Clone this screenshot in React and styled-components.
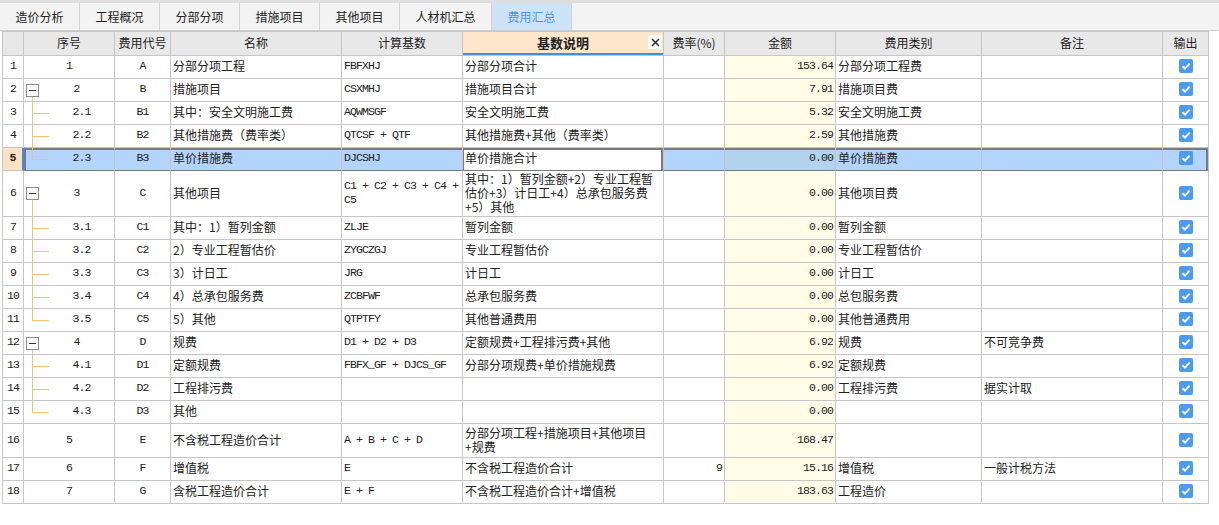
import React from "react";
import styled, { createGlobalStyle } from "styled-components";

const CJK = `"Noto Sans CJK SC", "Noto Sans", sans-serif`;
const MONO = `"Liberation Mono", "DejaVu Sans Mono", monospace`;
const GRID = "#c6c6c6";
const TREE = "#f7c46a";
const DARK = "#7a7a7a";
const COLS = "21px 91px 56px 171px 121px 201px 61px 111px 146px 181px 46px";

const GlobalStyle = createGlobalStyle`
  body {
    margin: 0;
    background: #fff;
    font-family: ${CJK};
    font-size: 12px;
    color: #222;
  }
`;

const Page = styled.div`
  width: 1219px;
  height: 525px;
  overflow: hidden;
  background: #fff;
`;

const TabBar = styled.div`
  display: flex;
  height: 27px;
  background: #f3f3f3;
  border-top: 3px solid #dedede;
  border-bottom: 1px solid #d0d0d0;
`;

const Tab = styled.div`
  display: flex;
  align-items: center;
  padding: 0 15.5px 1px;
  border-right: 1px solid #d4d4d4;
  font-size: 12px;
  color: ${p => (p.$active ? "#4e95e2" : "#222")};
  background: ${p => (p.$active ? "#cde4f8" : "transparent")};
`;

const Table = styled.div`
  margin-left: 2px;
  width: 1206px;
  border-left: 1px solid ${GRID};
`;

const HeaderRow = styled.div`
  display: grid;
  grid-template-columns: ${COLS};
  height: 24px;
  border-top: 1px solid ${GRID};
`;

const HeadCell = styled.div`
  position: relative;
  box-sizing: border-box;
  display: flex;
  align-items: center;
  justify-content: center;
  padding-bottom: 2px;
  border-right: 1px solid ${GRID};
  border-bottom: 1px solid ${GRID};
  background: ${p => (p.$active ? "#fde6c9" : "#e8e8e8")};
  font-weight: ${p => (p.$active ? "bold" : "normal")};
  font-size: ${p => (p.$active ? "13px" : "12px")};
  box-shadow: ${p => (p.$active ? "inset 0 -2px 0 #3d8ee6" : "none")};
`;

const CloseBtn = styled.div`
  position: absolute;
  right: 1px;
  top: 3px;
  width: 14px;
  height: 14px;
  background: #fff;
  display: flex;
  align-items: center;
  justify-content: center;
`;

const Row = styled.div`
  display: grid;
  grid-template-columns: ${COLS};
  height: ${p => p.$h}px;
`;

const Cell = styled.div`
  box-sizing: border-box;
  display: flex;
  align-items: center;
  justify-content: ${p =>
    p.$align === "right" ? "flex-end" : p.$align === "center" ? "center" : "flex-start"};
  text-align: ${p => p.$align || "left"};
  padding: ${p => (p.$flush ? "0" : "0 2px 2px")};
  border-right: ${p => (p.$marker ? "2px solid #3d8ee6" : `1px solid ${GRID}`)};
  border-bottom: 1px solid ${p => (p.$sel ? DARK : GRID)};
  background: ${p => p.$bg || "#fff"};
  font-family: ${p => (p.$mono ? MONO : CJK)};
  font-size: ${p => (p.$mono ? "11.5px" : "12px")};
  letter-spacing: ${p => (p.$mono ? "-0.9px" : "0")};
  font-weight: ${p => (p.$bold ? "bold" : "normal")};
  white-space: pre-line;
  line-height: 14px;
  overflow: hidden;
  box-shadow: ${p => p.$shadow || "none"};
`;

const SeqWrap = styled.div`
  display: flex;
  align-self: stretch;
  flex: 1;
`;

const SeqText = styled.div`
  flex: 1;
  display: flex;
  align-items: center;
  justify-content: center;
  padding-bottom: 2px;
`;

const ParentGutter = styled.div`
  flex: none;
  width: 13px;
  margin-left: 2px;
  display: flex;
  flex-direction: column;
`;

const Spacer = styled.div`
  flex: 1;
`;

const Tail = styled.div`
  flex: 1;
  margin-left: 6px;
  border-left: 1px solid ${TREE};
`;

const Toggle = styled.div`
  box-sizing: border-box;
  width: 13px;
  height: 13px;
  border: 1px solid #8c8c8c;
  background: #fff;
  display: flex;
  align-items: center;
  justify-content: center;
  &::after {
    content: "";
    width: 7px;
    height: 1px;
    background: #333;
  }
`;

const Branch = styled.div`
  flex: none;
  width: 17px;
  margin-left: 8px;
  display: flex;
  flex-direction: column;
`;

const BranchTop = styled.div`
  flex: 1;
  border-left: 1px solid ${TREE};
  border-bottom: 1px solid ${TREE};
`;

const BranchBottom = styled.div`
  flex: 1;
  border-left: ${p => (p.$end ? "none" : `1px solid ${TREE}`)};
`;

const rows = [
  { seq: "1", code: "A", name: "分部分项工程", base: "FBFXHJ", desc: "分部分项合计", amt: "153.64", type: "分部分项工程费" },
  { seq: "2", tree: "parent", code: "B", name: "措施项目", base: "CSXMHJ", desc: "措施项目合计", amt: "7.91", type: "措施项目费" },
  { seq: "2.1", tree: "child", code: "B1", name: "其中：安全文明施工费", base: "AQWMSGF", desc: "安全文明施工费", amt: "5.32", type: "安全文明施工费" },
  { seq: "2.2", tree: "child", code: "B2", name: "其他措施费（费率类）", base: "QTCSF + QTF", desc: "其他措施费+其他（费率类）", amt: "2.59", type: "其他措施费" },
  { seq: "2.3", tree: "last", code: "B3", name: "单价措施费", base: "DJCSHJ", desc: "单价措施合计", amt: "0.00", type: "单价措施费", selected: true },
  { seq: "3", tree: "parent", code: "C", name: "其他项目", base: "C1 + C2 + C3 + C4 +\nC5", desc: "其中：1）暂列金额+2）专业工程暂\n估价+3）计日工+4）总承包服务费\n+5）其他", amt: "0.00", type: "其他项目费", h: 46 },
  { seq: "3.1", tree: "child", code: "C1", name: "其中：1）暂列金额", base: "ZLJE", desc: "暂列金额", amt: "0.00", type: "暂列金额" },
  { seq: "3.2", tree: "child", code: "C2", name: "2）专业工程暂估价", base: "ZYGCZGJ", desc: "专业工程暂估价", amt: "0.00", type: "专业工程暂估价" },
  { seq: "3.3", tree: "child", code: "C3", name: "3）计日工", base: "JRG", desc: "计日工", amt: "0.00", type: "计日工" },
  { seq: "3.4", tree: "child", code: "C4", name: "4）总承包服务费", base: "ZCBFWF", desc: "总承包服务费", amt: "0.00", type: "总包服务费" },
  { seq: "3.5", tree: "last", code: "C5", name: "5）其他", base: "QTPTFY", desc: "其他普通费用", amt: "0.00", type: "其他普通费用" },
  { seq: "4", tree: "parent", code: "D", name: "规费", base: "D1 + D2 + D3", desc: "定额规费+工程排污费+其他", amt: "6.92", type: "规费", note: "不可竞争费" },
  { seq: "4.1", tree: "child", code: "D1", name: "定额规费", base: "FBFX_GF + DJCS_GF", desc: "分部分项规费+单价措施规费", amt: "6.92", type: "定额规费" },
  { seq: "4.2", tree: "child", code: "D2", name: "工程排污费", base: "", desc: "", amt: "0.00", type: "工程排污费", note: "据实计取" },
  { seq: "4.3", tree: "last", code: "D3", name: "其他", base: "", desc: "", amt: "0.00", type: "" },
  { seq: "5", code: "E", name: "不含税工程造价合计", base: "A + B + C + D", desc: "分部分项工程+措施项目+其他项目\n+规费", amt: "168.47", type: "", h: 34 },
  { seq: "6", code: "F", name: "增值税", base: "E", desc: "不含税工程造价合计", rate: "9", amt: "15.16", type: "增值税", note: "一般计税方法" },
  { seq: "7", code: "G", name: "含税工程造价合计", base: "E + F", desc: "不含税工程造价合计+增值税", amt: "183.63", type: "工程造价" },
];

const tabs = ["造价分析", "工程概况", "分部分项", "措施项目", "其他项目", "人材机汇总", "费用汇总"];

const heads = ["", "序号", "费用代号", "名称", "计算基数", "基数说明", "费率(%)", "金额", "费用类别", "备注", "输出"];

function CheckBox() {
  return (
    <svg width="14" height="14" viewBox="0 0 14 14">
      <rect x="0" y="0" width="14" height="14" rx="2" fill="#4b9bf3" />
      <polyline points="3.5,7.2 6,9.6 10.6,4.6" fill="none" stroke="#fff" strokeWidth="2" />
    </svg>
  );
}

function SeqCell({ r, shadow, sel }) {
  if (!r.tree) {
    return (
      <Cell $align="center" $mono $sel={sel} $shadow={shadow} $bg={sel ? "#b3d4fc" : undefined}>
        {r.seq}
      </Cell>
    );
  }
  return (
    <Cell $flush $mono $sel={sel} $shadow={shadow} $bg={sel ? "#b3d4fc" : undefined}>
      <SeqWrap>
        {r.tree === "parent" ? (
          <ParentGutter>
            <Spacer />
            <Toggle />
            <Tail />
          </ParentGutter>
        ) : (
          <Branch>
            <BranchTop />
            <BranchBottom $end={r.tree === "last"} />
          </Branch>
        )}
        <SeqText>{r.seq}</SeqText>
      </SeqWrap>
    </Cell>
  );
}

function DataRow({ r, n }) {
  const sel = !!r.selected;
  const top = sel ? `inset 0 2px 0 ${DARK}` : undefined;
  const bg = sel ? "#b3d4fc" : undefined;
  return (
    <Row $h={r.h || 23}>
      <Cell $align="center" $mono $bold={sel} $marker={sel} $bg={sel ? "#fde3c3" : undefined}>
        {n}
      </Cell>
      <SeqCell r={r} sel={sel} shadow={sel ? `${top}, inset 2px 0 0 ${DARK}` : undefined} />
      <Cell $align="center" $mono $sel={sel} $shadow={top} $bg={bg}>{r.code}</Cell>
      <Cell $sel={sel} $shadow={top} $bg={bg}>{r.name}</Cell>
      <Cell $mono $sel={sel} $shadow={top} $bg={bg}>{r.base}</Cell>
      <Cell $sel={sel} $shadow={sel ? `inset 0 2px 0 ${DARK}, inset 1px 0 0 ${DARK}, inset -2px 0 0 ${DARK}` : undefined}>
        {r.desc}
      </Cell>
      <Cell $align="right" $mono $sel={sel} $shadow={top} $bg={bg}>{r.rate || ""}</Cell>
      <Cell $align="right" $mono $sel={sel} $shadow={top} $bg={sel ? "#b2d4ef" : "#fffde8"}>{r.amt}</Cell>
      <Cell $sel={sel} $shadow={top} $bg={bg}>{r.type}</Cell>
      <Cell $sel={sel} $shadow={top} $bg={bg}>{r.note || ""}</Cell>
      <Cell $align="center" $sel={sel} $shadow={sel ? `${top}, inset -2px 0 0 ${DARK}` : undefined} $bg={bg}>
        <CheckBox />
      </Cell>
    </Row>
  );
}

export default function App() {
  return (
    <Page>
      <GlobalStyle />
      <TabBar>
        {tabs.map(t => (
          <Tab key={t} $active={t === "费用汇总"}>{t}</Tab>
        ))}
      </TabBar>
      <Table>
        <HeaderRow>
          {heads.map((h, i) => (
            <HeadCell key={i} $active={h === "基数说明"}>
              {h}
              {h === "基数说明" && (
                <CloseBtn>
                  <svg width="9" height="9" viewBox="0 0 9 9">
                    <path d="M1 1 L8 8 M8 1 L1 8" stroke="#333" strokeWidth="1.6" />
                  </svg>
                </CloseBtn>
              )}
            </HeadCell>
          ))}
        </HeaderRow>
        {rows.map((r, i) => (
          <DataRow key={i} r={r} n={i + 1} />
        ))}
      </Table>
    </Page>
  );
}
